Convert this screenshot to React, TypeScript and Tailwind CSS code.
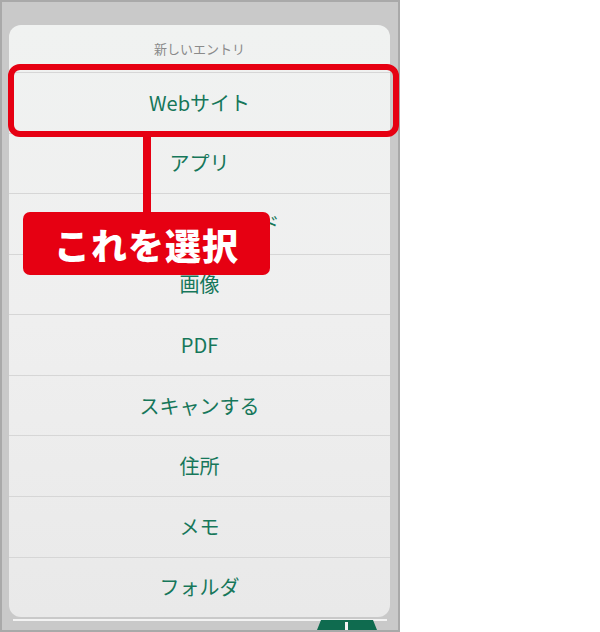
import React from "react";

const items = [
  "Webサイト",
  "アプリ",
  "クレジットカード",
  "画像",
  "PDF",
  "スキャンする",
  "住所",
  "メモ",
  "フォルダ",
];

export default function App() {
  return (
    <div className="flex h-[632px] w-[600px] bg-white font-['Noto_Sans_CJK_JP',sans-serif]">
      {/* phone screen */}
      <div className="relative flex h-[632px] w-[400px] flex-col border-2 border-[#a9a9a9] bg-[#c9c9c9]">
        {/* action sheet */}
        <div className="ml-[7px] mt-[23px] flex h-[592px] w-[381px] flex-col overflow-hidden rounded-[12px] bg-gradient-to-b from-[#f0f2f1] via-[#efefef] to-[#e9e9e9]">
          <div className="flex h-[47px] items-center justify-center text-[13px] text-[#8a8a8a]">
            新しいエントリ
          </div>
          {items.map((label) => (
            <div
              key={label}
              className="flex flex-1 items-center justify-center border-t border-[#d6d6d6] text-[20px] text-[#16775a]"
            >
              {label}
            </div>
          ))}
        </div>

        {/* toolbar peeking below the sheet */}
        <div className="relative ml-[11px] mt-[2px] h-[11px] w-[374px]">
          <div className="h-[2px] w-full bg-[#f3f3f3]" />
          <svg className="absolute left-[302px] top-0" width="64" height="11" viewBox="0 0 64 11">
            <path d="M6 1 H58 L62 11 H2 Z" fill="#0f6b4f" />
            <rect x="30" y="3" width="3" height="8" fill="#f3f3f3" />
          </svg>
        </div>

        {/* highlight frame */}
        <div className="absolute left-[6px] top-[62px] h-[73px] w-[391px] rounded-[12px] border-[6px] border-[#e60012]" />
        {/* connector */}
        <div className="absolute left-[141px] top-[132px] h-[80px] w-[8px] bg-[#e60012]" />
        {/* callout */}
        <div className="absolute left-[21px] top-[210px] flex h-[63px] w-[247px] items-center justify-center rounded-[7px] bg-[#e60012] text-[36px] font-black tracking-[1px] text-white">
          これを選択
        </div>
      </div>
    </div>
  );
}
